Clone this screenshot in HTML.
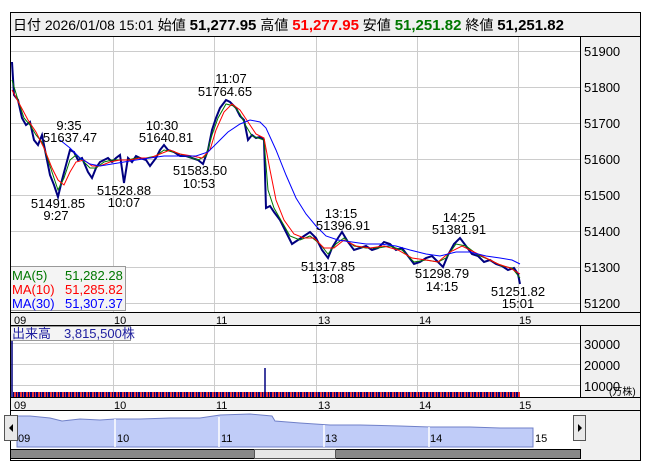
<!DOCTYPE html><html><head><meta charset="utf-8"><style>
body{margin:0;background:#fff;width:653px;height:470px;overflow:hidden;font-family:"Liberation Sans","Noto Sans CJK JP",sans-serif}
svg text{font-family:"Liberation Sans","Noto Sans CJK JP",sans-serif}
</style></head><body>
<svg width="653" height="470" xmlns="http://www.w3.org/2000/svg">
<defs><pattern id="vb" width="6" height="6" patternUnits="userSpaceOnUse"><rect width="2" height="6" fill="#000080"/><rect x="4" width="1" height="6" fill="#000080"/></pattern></defs>
<!-- header -->
<rect x="10.5" y="12.5" width="630" height="24" fill="#f0f0f0" stroke="#000"/>
<text x="13" y="30" font-size="14" fill="#000">日付 2026/01/08 15:01 始値 <tspan font-weight="bold" font-size="15">51,277.95</tspan> 高値 <tspan font-weight="bold" font-size="15" fill="#f00">51,277.95</tspan> 安値 <tspan font-weight="bold" font-size="15" fill="#070">51,251.82</tspan> 終値 <tspan font-weight="bold" font-size="15">51,251.82</tspan></text>
<!-- right axis -->
<rect x="580" y="37" width="60" height="275" fill="#f0f0f0"/>
<rect x="580" y="325" width="60" height="72" fill="#f0f0f0"/>
<rect x="580" y="410" width="60" height="50" fill="#f0f0f0"/>
<!-- grids -->
<g stroke="#ccc" stroke-width="1">
<line x1="113.5" y1="37" x2="113.5" y2="312"/><line x1="214.5" y1="37" x2="214.5" y2="312"/><line x1="316.5" y1="37" x2="316.5" y2="312"/><line x1="417.5" y1="37" x2="417.5" y2="312"/><line x1="518.5" y1="37" x2="518.5" y2="312"/>
<line x1="11" y1="51.5" x2="580" y2="51.5"/><line x1="11" y1="87.5" x2="580" y2="87.5"/><line x1="11" y1="123.5" x2="580" y2="123.5"/><line x1="11" y1="159.5" x2="580" y2="159.5"/><line x1="11" y1="195.5" x2="580" y2="195.5"/><line x1="11" y1="231.5" x2="580" y2="231.5"/><line x1="11" y1="267.5" x2="580" y2="267.5"/><line x1="11" y1="303.5" x2="580" y2="303.5"/>
<line x1="113.5" y1="325" x2="113.5" y2="397"/><line x1="214.5" y1="325" x2="214.5" y2="397"/><line x1="316.5" y1="325" x2="316.5" y2="397"/><line x1="417.5" y1="325" x2="417.5" y2="397"/><line x1="518.5" y1="325" x2="518.5" y2="397"/>
<line x1="11" y1="343.5" x2="580" y2="343.5"/><line x1="11" y1="364.5" x2="580" y2="364.5"/><line x1="11" y1="385.5" x2="580" y2="385.5"/>
</g>
<g font-size="13" fill="#000">
<text x="584" y="56">51900</text><text x="584" y="92">51800</text><text x="584" y="128">51700</text><text x="584" y="164">51600</text><text x="584" y="200">51500</text><text x="584" y="236">51400</text><text x="584" y="272">51300</text><text x="584" y="308">51200</text>
<text x="584" y="349">30000</text><text x="584" y="370">20000</text><text x="584" y="391">10000</text>
</g>
<text x="609" y="395" font-size="10" fill="#000">(万株)</text>
<!-- price -->
<polyline fill="none" stroke="#000080" stroke-width="2" points="12,62 14,95 18,100 22,118 26,125 30,122 34,140 38,145 42,135 46,155 50,175 54,185 58,197 62,180 66,165 70,150 74,152 78,160 82,158 88,172 92,178 96,168 100,162 104,160 108,158 112,162 116,158 120,155 124,183 128,158 132,162 136,156 140,158 146,160 150,166 156,158 160,150 164,145 168,150 174,152 180,156 186,156 192,158 198,160 203,164 208,150 212,130 216,118 220,108 226,100 230,102 236,108 240,116 244,120 248,140 252,135 256,138 260,137 264,140 266,208 270,206 274,212 280,220 286,232 292,244 298,240 304,236 310,232 316,238 322,250 328,258 332,248 338,238 342,232 348,242 354,250 360,248 366,246 372,250 378,248 384,242 390,244 396,250 402,248 408,256 414,264 420,262 426,258 432,256 438,262 443,267 448,255 454,244 460,238 466,246 472,254 478,256 484,262 490,260 496,264 502,266 508,270 514,268 518,274 520,284"/>
<polyline fill="none" stroke="#070" stroke-width="1" points="12,80 18,100 24,118 30,125 36,135 42,142 48,160 54,178 58,190 64,178 70,160 76,155 82,160 90,168 96,168 104,162 112,160 120,160 128,160 136,158 146,158 156,156 164,150 174,152 186,156 198,160 206,156 212,135 218,118 226,104 234,106 240,114 246,126 252,136 258,138 264,140 268,190 274,208 282,222 290,236 300,240 310,236 320,244 328,254 336,244 344,238 354,246 366,248 378,248 390,246 402,250 414,262 426,260 438,262 446,258 456,244 466,246 478,255 490,260 502,266 512,268 520,278"/>
<polyline fill="none" stroke="#f00" stroke-width="1" points="12,90 20,105 28,120 36,132 44,148 52,168 58,180 64,185 70,172 76,162 84,160 92,166 100,166 110,162 120,160 130,160 140,158 150,158 160,154 170,150 180,154 192,156 202,158 210,150 216,130 224,112 232,104 240,110 248,122 256,134 264,138 270,170 276,200 284,220 294,234 304,238 314,238 324,248 334,248 344,240 356,246 370,248 384,246 398,250 412,258 426,260 438,262 450,252 462,246 474,252 486,258 498,264 510,268 520,274"/>
<polyline fill="none" stroke="#00f" stroke-width="1" points="60,140 70,148 80,158 90,164 100,166 112,164 124,162 136,160 150,158 164,156 180,156 196,156 208,152 218,142 228,132 240,124 250,120 260,122 266,128 276,150 286,175 296,198 306,214 316,226 326,236 338,240 352,242 366,244 380,244 396,246 410,250 426,254 440,256 456,252 470,252 486,256 500,258 512,260 520,264"/>
<g font-size="13" fill="#000" text-anchor="middle">
<text x="231" y="83">11:07</text><text x="225" y="96">51764.65</text>
<text x="69" y="130">9:35</text><text x="70" y="142">51637.47</text>
<text x="162" y="130">10:30</text><text x="166" y="142">51640.81</text>
<text x="200" y="175">51583.50</text><text x="199" y="188">10:53</text>
<text x="124" y="195">51528.88</text><text x="124" y="207">10:07</text>
<text x="58" y="208">51491.85</text><text x="56" y="220">9:27</text>
<text x="341" y="218">13:15</text><text x="343" y="230">51396.91</text>
<text x="459" y="222">14:25</text><text x="459" y="234">51381.91</text>
<text x="328" y="271">51317.85</text><text x="328" y="283">13:08</text>
<text x="442" y="278">51298.79</text><text x="442" y="291">14:15</text>
<text x="518" y="296">51251.82</text><text x="518" y="308">15:01</text>
</g>
<rect x="10.5" y="266.5" width="115" height="44" fill="#f4f4f4" stroke="#999"/>
<g font-size="13"><text x="12" y="280" fill="#070">MA(5)</text><text x="65" y="280" fill="#070">51,282.28</text>
<text x="12" y="294" fill="#f00">MA(10)</text><text x="65" y="294" fill="#f00">51,285.82</text>
<text x="12" y="308" fill="#00f">MA(30)</text><text x="65" y="308" fill="#00f">51,307.37</text></g>
<!-- time axes -->
<rect x="10.5" y="312.5" width="630" height="13" fill="#f0f0f0" stroke="#000"/>
<rect x="10.5" y="397.5" width="630" height="13" fill="#f0f0f0" stroke="#000"/>
<g font-size="11" fill="#000"><text x="14" y="324">09</text><text x="114" y="324">10</text><text x="216" y="324">11</text><text x="318" y="324">13</text><text x="419" y="324">14</text><text x="519" y="324">15</text>
<text x="14" y="409">09</text><text x="114" y="409">10</text><text x="216" y="409">11</text><text x="318" y="409">13</text><text x="419" y="409">14</text><text x="519" y="409">15</text></g>
<!-- volume -->
<line x1="12" y1="397" x2="12" y2="335" stroke="#000080" stroke-width="1.5"/>
<line x1="265" y1="397" x2="265" y2="368" stroke="#000080" stroke-width="1.5"/>
<rect x="13" y="392" width="507" height="5" fill="#e33"/>
<rect x="13" y="392" width="507" height="5" fill="url(#vb)"/>
<rect x="10.5" y="326.5" width="120" height="14" fill="#f4f4f4" stroke="#999"/>
<text x="12" y="338" font-size="13" fill="#2020a0">出来高　3,815,500株</text>
<line x1="580.5" y1="37" x2="580.5" y2="312" stroke="#000"/>
<line x1="580.5" y1="325" x2="580.5" y2="397" stroke="#000"/>
<rect x="10.5" y="12.5" width="630" height="448" fill="none" stroke="#000"/>
<!-- navigator -->
<path d="M17,416 L30,416 L50,418 L62,421 L80,419 L100,420 L115,419 L140,419 L170,418 L200,418 L220,415 L250,414 L272,416 L275,421 L300,423 L330,425 L360,425 L400,426 L430,427 L470,427 L500,428 L533,428 L533,447 L17,447 Z" fill="#c0ccf8" stroke="#7080c8"/>
<g stroke="#fff" stroke-width="1.5"><line x1="115" y1="419" x2="115" y2="447"/><line x1="219" y1="417" x2="219" y2="447"/><line x1="324" y1="425" x2="324" y2="447"/><line x1="429" y1="427" x2="429" y2="447"/></g>
<g font-size="11"><text x="18" y="442">09</text><text x="117" y="442">10</text><text x="221" y="442">11</text><text x="325" y="442">13</text><text x="430" y="442">14</text><text x="535" y="442">15</text></g>
<rect x="4.5" y="415.5" width="13" height="25" fill="#e8e8e8" stroke="#555"/>
<path d="M9,428 L13,424 L13,432 Z" fill="#000"/>
<rect x="573.5" y="415.5" width="12" height="25" fill="#e8e8e8" stroke="#555"/>
<path d="M582,428 L578,424 L578,432 Z" fill="#000"/>
<rect x="10.5" y="449.5" width="570" height="9" fill="#888" stroke="#000"/>
<rect x="254.5" y="449.5" width="81" height="9" fill="#e8e8e8" stroke="#555"/>
</svg>
</body></html>
